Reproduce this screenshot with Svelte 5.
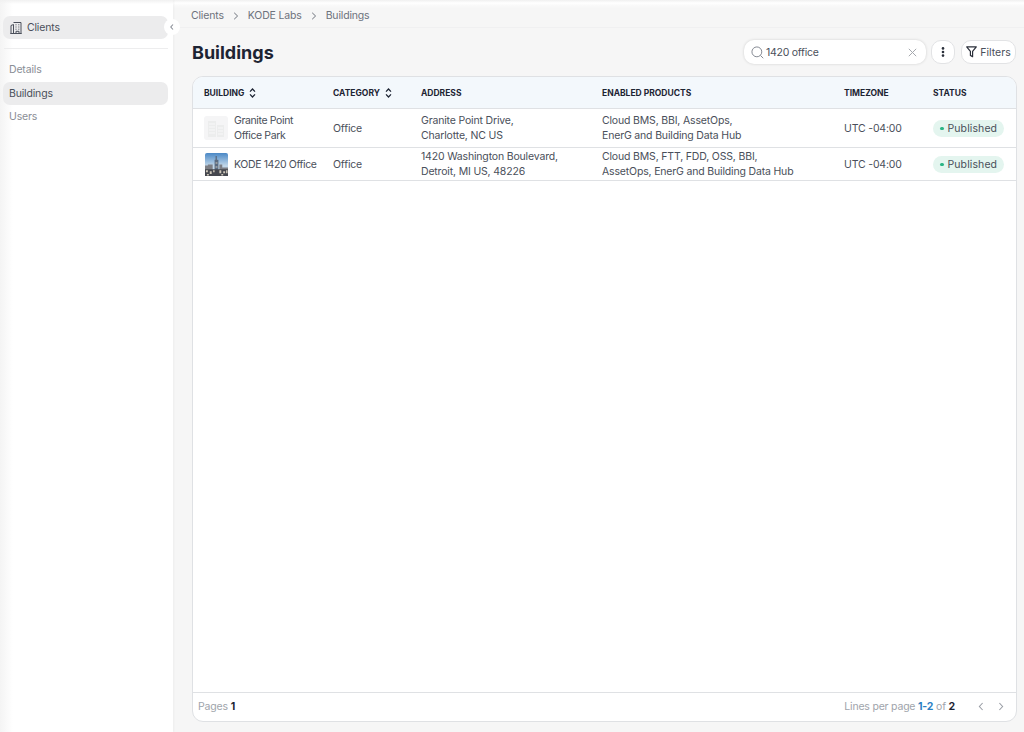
<script>
  const crumbs = ['Clients', 'KODE Labs', 'Buildings'];
  const nav = ['Details', 'Buildings', 'Users'];

  const rows = [
    {
      name: ['Granite Point', 'Office Park'],
      thumb: 'placeholder',
      category: 'Office',
      address: ['Granite Point Drive,', 'Charlotte, NC US'],
      products: ['Cloud BMS, BBI, AssetOps,', 'EnerG and Building Data Hub'],
      timezone: 'UTC -04:00',
      status: 'Published'
    },
    {
      name: ['KODE 1420 Office'],
      thumb: 'photo',
      category: 'Office',
      address: ['1420 Washington Boulevard,', 'Detroit, MI US, 48226'],
      products: ['Cloud BMS, FTT, FDD, OSS, BBI,', 'AssetOps, EnerG and Building Data Hub'],
      timezone: 'UTC -04:00',
      status: 'Published'
    }
  ];
</script>

<div class="page">
  <aside class="sidebar">
    <div class="client-btn">
      <svg width="12" height="13" viewBox="0 0 12 13" fill="none" stroke="#4a4f5a" stroke-width="1">
        <path d="M1 12.500V4.500L3.500 3.500V12.500M3.500 1.500h7.500v11H3.500M.3 12.500h11.400" />
        <path d="M5.500 3.800h1M8.300 3.800h1M5.500 6h1M8.300 6h1M5.500 8.200h1M8.300 8.200h1M6 12.500v-2.200h3v2.200" />
      </svg>
      <span>Clients</span>
    </div>
    <div class="side-divider"></div>
    <nav class="side-nav">
      {#each nav as item}
        <div class="nav-item" class:active={item === 'Buildings'}>{item}</div>
      {/each}
    </nav>
    <button class="collapse" aria-label="Collapse">
      <svg width="6" height="8" viewBox="0 0 6 8" fill="none" stroke="#8a8f98" stroke-width="1.1"><path d="M4 1.500 1.800 4 4 6.500" /></svg>
    </button>
  </aside>

  <main class="main">
    <div class="breadcrumbs">
      {#each crumbs as crumb, i}
        {#if i > 0}
          <svg class="crumb-sep" width="6" height="8" viewBox="0 0 6 8" fill="none" stroke="#6d727c" stroke-width="1"><path d="M1.200 .8 4.600 4 1.200 7.200" /></svg>
        {/if}
        <span>{crumb}</span>
      {/each}
    </div>

    <div class="title-row">
      <h1>Buildings</h1>
      <div class="tools">
        <div class="search">
          <svg width="13" height="13" viewBox="0 0 14 14" fill="none" stroke="#7c818a" stroke-width="1"><circle cx="6.300" cy="6.300" r="5.300" /><path d="m10.200 10.200 3 3" /></svg>
          <span class="search-value">1420 office</span>
          <svg class="clear" width="9" height="9" viewBox="0 0 9 9" fill="none" stroke="#a5a8ae" stroke-width="1"><path d="m.8.8 7.400 7.400M8.200.8.8 8.200" /></svg>
        </div>
        <button class="icon-btn" aria-label="More">
          <svg width="4" height="12" viewBox="0 0 4 12" fill="#2a2f3a"><circle cx="2" cy="2.400" r="1.300" /><circle cx="2" cy="6" r="1.300" /><circle cx="2" cy="9.600" r="1.300" /></svg>
        </button>
        <button class="filters">
          <svg width="11" height="12" viewBox="0 0 10 11" fill="none" stroke="#2a2f3a" stroke-width="1.1"><path d="M.6.8h8.800L6 5v4.800L4 8.600V5z" stroke-linejoin="round" /></svg>
          Filters
        </button>
      </div>
    </div>

    <section class="card">
      <div class="table-wrap">
        <table>
          <thead>
            <tr>
              <th class="c-building">
                <span class="sortable">BUILDING
                  <svg width="7" height="10" viewBox="0 0 7 10" fill="none" stroke="#1d2433" stroke-width="1.3"><path d="M1 3.600 3.500 1 6 3.600M1 6.400 3.500 9 6 6.400" /></svg>
                </span>
              </th>
              <th class="c-category">
                <span class="sortable">CATEGORY
                  <svg width="7" height="10" viewBox="0 0 7 10" fill="none" stroke="#1d2433" stroke-width="1.3"><path d="M1 3.600 3.500 1 6 3.600M1 6.400 3.500 9 6 6.400" /></svg>
                </span>
              </th>
              <th class="c-address">ADDRESS</th>
              <th class="c-products">ENABLED PRODUCTS</th>
              <th class="c-timezone">TIMEZONE</th>
              <th>STATUS</th>
            </tr>
          </thead>
          <tbody>
            {#each rows as row}
              <tr>
                <td>
                  <div class="building">
                    {#if row.thumb === 'placeholder'}
                      <svg class="thumb" width="24" height="24" viewBox="0 0 24 24">
                        <rect width="24" height="24" rx="3" fill="#f5f5f6" />
                        <path d="M4 5h8v16H4zM13 9h7v12h-7z" fill="#eceded" />
                        <path d="M5 8h6M5 11h6M5 14h6M5 17h6M14 12h5M14 15h5M14 18h5" stroke="#f8f8f9" stroke-width="1" />
                      </svg>
                    {:else}
                      <svg class="thumb photo" width="23" height="23" viewBox="0 0 24 24">
                        <defs>
                          <linearGradient id="sky" x1="0" y1="0" x2="0" y2="1">
                            <stop offset="0" stop-color="#4a88c6" />
                            <stop offset="0.55" stop-color="#c0d6e8" />
                          </linearGradient>
                        </defs>
                        <rect width="24" height="24" rx="2" fill="url(#sky)" />
                        <path d="M10 24V7h1V3h1.400v4H14v17z" fill="#5a6b80" />
                        <path d="M0 24V13h3v-1h5v12zM15 24V12h3v3h6v9z" fill="#7d7f85" />
                        <path d="M0 24v-7h24v7z" fill="#45474e" />
                        <path d="M1 18h2v2H1zM5 19h2v3H5zM8.500 18h1.500v2H8.500zM15 18h2v3h-2zM19 19h2v2h-2zM22 18h1.500v3H22zM2 22h2v1.500H2zM17 22h2v1.500h-2zM11 10h2v1h-2zM11 14h2v1h-2z" fill="#cfc8ba" />
                      </svg>
                    {/if}
                    <div class="lines name">
                      {#each row.name as line}<div>{line}</div>{/each}
                    </div>
                  </div>
                </td>
                <td>{row.category}</td>
                <td class="lines">
                  {#each row.address as line}<div>{line}</div>{/each}
                </td>
                <td class="lines">
                  {#each row.products as line}<div>{line}</div>{/each}
                </td>
                <td>{row.timezone}</td>
                <td>
                  <span class="badge"><i class="dot"></i>{row.status}</span>
                </td>
              </tr>
            {/each}
          </tbody>
        </table>
      </div>

      <footer class="card-footer">
        <div>Pages <b>1</b></div>
        <div class="pager">
          <span class="pager-text">Lines per page <b class="range">1-2</b> of <b>2</b></span>
          <svg width="6" height="9" viewBox="0 0 6 9" fill="none" stroke="#9a9ea6" stroke-width="1.1"><path d="M4.600 1 1.400 4.500l3.200 3.500" /></svg>
          <svg width="6" height="9" viewBox="0 0 6 9" fill="none" stroke="#9a9ea6" stroke-width="1.1"><path d="M1.400 1l3.200 3.500L1.400 8" /></svg>
        </div>
      </footer>
    </section>
  </main>
</div>

<style>
  :global(body) {
    margin: 0;
    background: #f6f6f6;
  }

  .page {
    display: flex;
    height: 732px;
    overflow: hidden;
    font-family: Inter, "Noto Sans", sans-serif;
    font-size: 10.5px;
    color: #4a4f5a;
    letter-spacing: -0.17px;
  }

  .sidebar {
    position: relative;
    box-sizing: border-box;
    flex: 0 0 173px;
    padding: 16px 5px 0 3px;
    background:
      linear-gradient(to bottom, #f1f1f1, rgba(255, 255, 255, 0) 4px),
      linear-gradient(to right, #f4f4f4, #fff 13px);
    box-shadow: 1px 0 2px rgba(0, 0, 0, 0.04);
  }

  .client-btn {
    display: flex;
    align-items: center;
    gap: 5px;
    height: 23px;
    padding: 0 7px;
    border-radius: 7px;
    background: #ececed;
    color: #4a4f5a;
  }

  .side-divider {
    height: 1px;
    margin: 9px 0 9px 1px;
    background: #ededee;
  }

  .nav-item {
    display: flex;
    align-items: center;
    height: 23px;
    margin-bottom: 0.5px;
    padding: 0 6px;
    border-radius: 7px;
    color: #8a8e96;
  }

  .nav-item.active {
    background: #ececed;
    color: #4a4f5a;
  }

  .collapse {
    position: absolute;
    top: 19px;
    right: -7px;
    display: flex;
    align-items: center;
    justify-content: center;
    width: 16px;
    height: 16px;
    padding: 0;
    border: 0;
    border-radius: 50%;
    background: #fff;
  }

  .main {
    flex: 1;
    display: flex;
    flex-direction: column;
    min-width: 0;
    padding: 0 7px 10px 19px;
  }

  .breadcrumbs {
    display: flex;
    align-items: center;
    gap: 8px;
    height: 28px;
    margin: 0 -7px 0 -19px;
    padding: 4px 0 0 18px;
    box-sizing: border-box;
    background: linear-gradient(to bottom, #f0f0f0, #fff 3px, #fafafa 5px, #f6f6f6 8px);
    border-bottom: 1px solid #f0f0f1;
    color: #6d727c;
  }

  .crumb-sep {
    margin: 0 1px;
  }

  .title-row {
    display: flex;
    align-items: center;
    justify-content: space-between;
    height: 48px;
  }

  h1 {
    margin: 0;
    font-size: 18px;
    font-weight: 700;
    color: #1d2433;
    letter-spacing: 0;
  }

  .tools {
    display: flex;
    align-items: center;
    gap: 5px;
    margin-right: 1px;
  }

  .search {
    display: flex;
    align-items: center;
    gap: 2px;
    box-sizing: border-box;
    width: 182px;
    height: 24px;
    padding: 0 9px 0 7px;
    border-radius: 10px;
    background: #fff;
    box-shadow: 0 0 3px rgba(0, 0, 0, 0.16);
    color: #4a4f5a;
  }

  .search-value {
    flex: 1;
    letter-spacing: -0.25px;
  }

  .icon-btn,
  .filters {
    display: flex;
    align-items: center;
    justify-content: center;
    height: 24px;
    padding: 0;
    border: 1px solid #e2e3e5;
    border-radius: 10px;
    background: #fff;
    font: inherit;
    color: #4a4f5a;
  }

  .icon-btn {
    width: 24px;
    margin-right: 1px;
  }

  .filters {
    gap: 3px;
    width: 55px;
  }

  .card {
    flex: 1;
    display: flex;
    flex-direction: column;
    min-height: 0;
    border: 1px solid #dfe1e4;
    border-radius: 11px;
    background: #fff;
    overflow: hidden;
  }

  .table-wrap {
    flex: 1;
  }

  table {
    width: 100%;
    border-collapse: collapse;
    table-layout: fixed;
  }

  th {
    height: 31px;
    padding: 0 0 0 11px;
    background: #f3f8fc;
    border-bottom: 1px solid #dfe1e4;
    text-align: left;
    font-size: 8.5px;
    font-weight: 700;
    color: #1d2433;
    letter-spacing: 0;
  }

  .c-building { width: 118px; }
  .c-category { width: 77px; }
  .c-address { width: 170px; }
  .c-products { width: 231px; }
  .c-timezone { width: 78px; }

  .sortable {
    display: inline-flex;
    align-items: center;
    gap: 5px;
  }

  td {
    padding: 0 0 0 11px;
    border-bottom: 1px solid #dfe1e4;
    line-height: 15px;
    white-space: nowrap;
  }

  tbody tr:first-child td {
    height: 38px;
  }

  tbody tr:last-child td {
    height: 32px;
  }

  .building {
    display: flex;
    align-items: center;
    gap: 6px;
  }

  .name {
    letter-spacing: -0.38px;
  }

  .thumb {
    flex: none;
  }

  .thumb.photo {
    margin-left: 1px;
  }

  .badge {
    display: inline-flex;
    align-items: center;
    gap: 4px;
    height: 17px;
    padding: 0 7px;
    border-radius: 9px;
    background: #e4f5ef;
    letter-spacing: 0.1px;
  }

  .dot {
    width: 3.5px;
    height: 3.5px;
    border-radius: 50%;
    background: #2cb585;
  }

  .card-footer {
    display: flex;
    align-items: center;
    justify-content: space-between;
    height: 29px;
    padding: 0 12px 2px 5px;
    box-sizing: border-box;
    border-top: 1px solid #dfe1e4;
    color: #a0a4ab;
  }

  .card-footer b {
    font-weight: 700;
    color: #1d2433;
  }

  .card-footer b.range {
    color: #2b7fc3;
  }

  .pager {
    display: flex;
    align-items: center;
    gap: 14px;
  }

  .pager-text {
    margin-right: 9px;
    letter-spacing: -0.2px;
  }
</style>
